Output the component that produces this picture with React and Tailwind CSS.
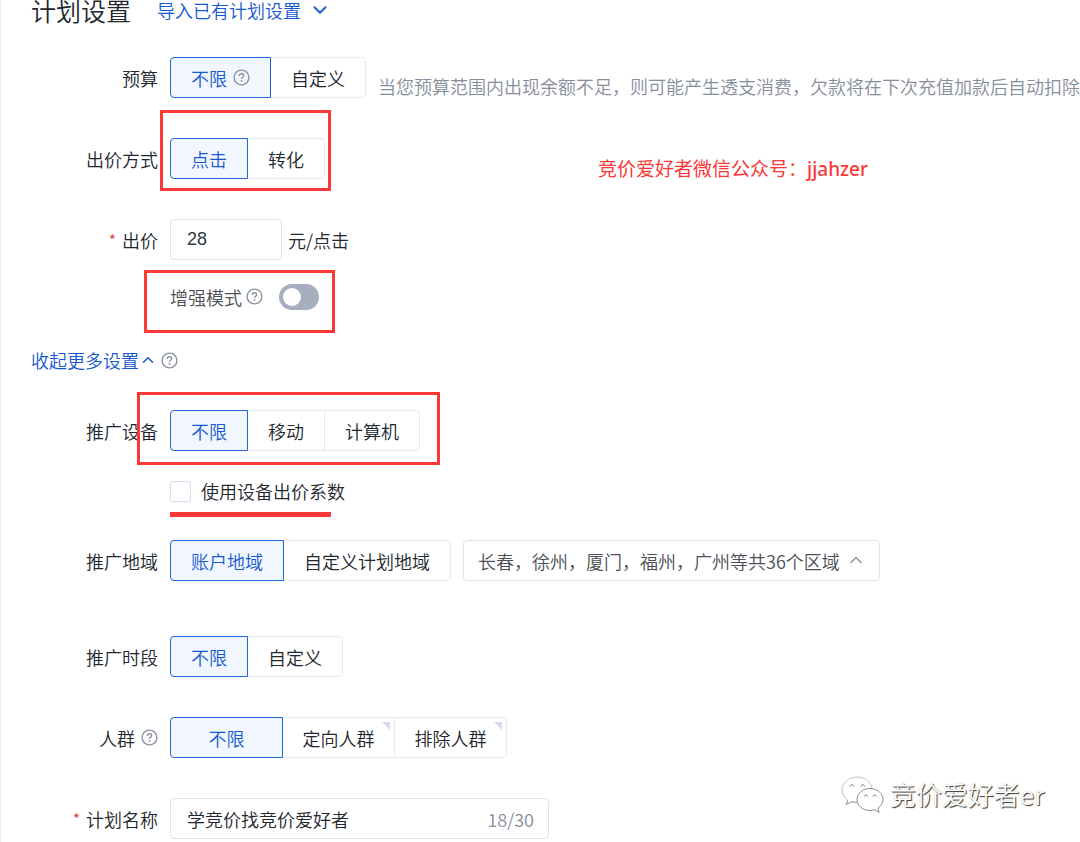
import React, { useState } from 'react';
import { ChevronDown, ChevronUp } from 'lucide-react';

function HelpIcon() {
  return (
    <svg className="w-[17px] h-[17px] shrink-0 text-[#8a91a0]" viewBox="0 0 17 17" fill="none" stroke="currentColor" aria-hidden="true">
      <circle cx="8.5" cy="8.5" r="7.4" strokeWidth="1.4" />
      <path strokeWidth="1.4" d="M6.4 6.9c0-1.3.9-2.1 2.1-2.1s2.1.8 2.1 1.9c0 1.5-2.1 1.5-2.1 3.2" />
      <circle cx="8.5" cy="11.9" r="0.9" fill="currentColor" stroke="none" />
    </svg>
  );
}

function Row({ label, htmlFor, required, help, children }) {
  return (
    <div className="flex items-center gap-3 h-[41px]">
      <label htmlFor={htmlFor} className="flex items-center justify-end gap-[6px] w-[127px] shrink-0 whitespace-nowrap">
        {required && <span className="text-base text-[#d9412f]">*</span>}
        {label}
        {help && <HelpIcon />}
      </label>
      {children}
    </div>
  );
}

function Segmented({ options, value, onChange, wide }) {
  return (
    <div className="flex shrink-0 pl-px">
      {options.map((opt) => (
        <button
          key={opt.name}
          type="button"
          aria-pressed={value === opt.name}
          onClick={() => onChange(opt.name)}
          className={`relative flex items-center justify-center gap-[6px] h-[41px] -ml-px border whitespace-nowrap first:rounded-l last:rounded-r ${wide ? 'w-[113px]' : 'px-5'} ${
            value === opt.name ? 'z-10 border-[#1f66d6] bg-[#f1f6ff] text-[#1659cf]' : 'border-[#e6e9f2] bg-white'
          }`}
        >
          {opt.name}
          {opt.help && <HelpIcon />}
          {opt.corner && (
            <span className="absolute top-1 right-1 w-2 h-2 bg-[#d5daea] [clip-path:polygon(0_0,100%_0,100%_100%)]"></span>
          )}
        </button>
      ))}
    </div>
  );
}

// red frame drawn over a control, inset values come from className
function Mark({ className }) {
  return <div className={`absolute z-20 border-3 border-[#fb3838] pointer-events-none ${className}`}></div>;
}

function Watermark() {
  return (
    <div className="absolute right-9 bottom-7 flex items-center gap-[6px] pointer-events-none">
      <svg className="w-11 h-10" viewBox="0 0 44 40" fill="#fff" strokeWidth="1" strokeLinejoin="round">
        <path stroke="#c4c4c4" d="M17 3C8.600 3 2 8.800 2 16c0 4.200 2.200 7.500 5.600 9.900L6.300 30.500l5.400-2.800c1.800.5 3.500.8 5.300.8C25.400 28.500 32 23 32 16S25.400 3 17 3z" />
        <path fill="none" stroke="#a0a0a0" d="M7.600 25.900L6.300 30.500l5.400-2.800c1.800.5 3.500.8 5.300.8" />
        <path stroke="#8c8c8c" d="M30 14.500c-7.200 0-13 4.900-13 11s5.800 11 13 11c1.600 0 3.100-.3 4.500-.7l4.700 2.500-1.300-4.200c3-2.100 5.100-5.100 5.100-8.600 0-6.100-5.800-11-13-11z" />
        <path fill="none" stroke="#777" d="M10 12.500c.2-2.400 3.300-2.400 3.500 0M21 12.500c.2-2.400 3.300-2.400 3.500 0M24.500 22.500c.2-2 2.900-2 3.100 0M33 22.500c.2-2 2.900-2 3.100 0" />
      </svg>
      <span className="text-[26px] leading-10 text-white [text-shadow:1px_1px_1px_#333,0_0_1px_#bbb]">竞价爱好者er</span>
    </div>
  );
}

function App() {
  const [budget, setBudget] = useState('不限');
  const [bidType, setBidType] = useState('点击');
  const [bid, setBid] = useState('28');
  const [enhanced, setEnhanced] = useState(false);
  const [device, setDevice] = useState('不限');
  const [ratio, setRatio] = useState(false);
  const [region, setRegion] = useState('账户地域');
  const [period, setPeriod] = useState('不限');
  const [crowd, setCrowd] = useState('不限');
  const [planName, setPlanName] = useState('学竞价找竞价爱好者');

  return (
    <main className="relative min-h-screen overflow-x-hidden border-l border-[#ececf0] bg-white pl-[30px] pb-[3px] font-['Noto_Sans_CJK_SC',sans-serif] font-[350] text-[18px] leading-6 text-[#22262e]">
      <header className="flex items-center gap-[26px] h-5">
        <h1 className="text-[25px]">计划设置</h1>
        <button type="button" className="flex items-center gap-2 text-[#1659cf]">
          导入已有计划设置
          <ChevronDown size={22} strokeWidth={2} />
        </button>
      </header>

      <section className="flex flex-col gap-10 mt-[37px]">
        <Row label="预算">
          <Segmented options={[{ name: '不限', help: true }, { name: '自定义' }]} value={budget} onChange={setBudget} />
          <p className="pt-4 whitespace-nowrap text-[#868d9b]">
            当您预算范围内出现余额不足，则可能产生透支消费，欠款将在下次充值加款后自动扣除
          </p>
        </Row>

        <Row label="出价方式">
          <div className="relative">
            <Segmented options={[{ name: '点击' }, { name: '转化' }]} value={bidType} onChange={setBidType} />
            <Mark className="-left-[10px] -right-[6px] -top-7 -bottom-3" />
          </div>
          <p className="ml-[261px] pt-5 text-[19px] font-normal whitespace-nowrap text-[#fb3838]">
            竞价爱好者微信公众号：<span className="font-['Noto_Sans',sans-serif] font-medium">jjahzer</span>
          </p>
        </Row>

        <Row label="出价" htmlFor="bid" required>
          <div className="flex items-center gap-[6px]">
            <input
              id="bid"
              type="text"
              value={bid}
              onChange={(e) => setBid(e.target.value)}
              className="w-28 h-[41px] px-4 rounded border border-[#dde1ee] font-['Liberation_Sans',sans-serif] font-normal text-[#33373f]"
            />
            元/点击
          </div>
        </Row>
      </section>

      <div className="flex mt-4 pl-[139px]">
        <div className="relative flex items-center gap-4 h-[41px]">
          <span className="flex items-center gap-1 text-[#4c4f57]">
            增强模式
            <HelpIcon />
          </span>
          <input
            type="checkbox"
            role="switch"
            aria-label="增强模式"
            checked={enhanced}
            onChange={(e) => setEnhanced(e.target.checked)}
            className="appearance-none w-10 h-[26px] p-1 rounded-full bg-[#a7aebf] before:block before:w-[18px] before:h-[18px] before:rounded-full before:bg-white checked:bg-[#1659cf] checked:before:translate-x-[14px]"
          />
          <Mark className="-left-[26px] -right-4 -top-[6px] -bottom-4" />
        </div>
      </div>

      <div className="flex items-center gap-1 mt-[31px]">
        <button type="button" className="flex items-center text-[#1659cf]">
          收起更多设置
          <ChevronUp size={18} strokeWidth={2} />
        </button>
        <HelpIcon />
      </div>

      <section className="mt-[38px]">
        <Row label="推广设备">
          <div className="relative">
            <Segmented
              options={[{ name: '不限' }, { name: '移动' }, { name: '计算机' }]}
              value={device}
              onChange={setDevice}
            />
            <Mark className="-left-[33px] -right-5 -top-[18px] -bottom-[14px]" />
          </div>
        </Row>

        <div className="flex mt-7 pl-[139px]">
          <label className="relative flex items-center gap-[10px]">
            <input
              type="checkbox"
              checked={ratio}
              onChange={(e) => setRatio(e.target.checked)}
              className="appearance-none w-[21px] h-[21px] rounded-xs border border-[#d9deee] checked:bg-[#1659cf]"
            />
            使用设备出价系数
            <span className="absolute left-0 -bottom-[14px] w-[161px] h-[5px] bg-[#fb3838]"></span>
          </label>
        </div>
      </section>

      <section className="mt-[37px]">
        <Row label="推广地域" htmlFor="area">
          <Segmented options={[{ name: '账户地域' }, { name: '自定义计划地域' }]} value={region} onChange={setRegion} />
          <div className="relative">
            <select
              id="area"
              className="appearance-none w-[417px] h-[41px] pl-[14px] pr-10 rounded border border-[#dde1ee] bg-white text-[#4c4f57]"
            >
              <option>长春，徐州，厦门，福州，广州等共36个区域</option>
            </select>
            <ChevronUp size={20} strokeWidth={1.5} className="absolute right-[14px] top-[10px] text-[#868d9b] pointer-events-none" />
          </div>
        </Row>
      </section>

      <section className="flex flex-col gap-10 mt-[55px]">
        <Row label="推广时段">
          <Segmented options={[{ name: '不限' }, { name: '自定义' }]} value={period} onChange={setPeriod} />
        </Row>

        <Row label="人群" help>
          <Segmented
            options={[{ name: '不限' }, { name: '定向人群', corner: true }, { name: '排除人群', corner: true }]}
            value={crowd}
            onChange={setCrowd}
            wide
          />
        </Row>

        <Row label="计划名称" htmlFor="planName" required>
          <div className="flex items-center w-[379px] h-[41px] pl-4 pr-[14px] rounded border border-[#dde1ee]">
            <input
              id="planName"
              type="text"
              value={planName}
              onChange={(e) => setPlanName(e.target.value)}
              className="flex-1 min-w-0 outline-none"
            />
            <span className="text-[#868d9b]">{planName.length * 2}/30</span>
          </div>
        </Row>
      </section>

      <Watermark />
    </main>
  );
}

export default App;
